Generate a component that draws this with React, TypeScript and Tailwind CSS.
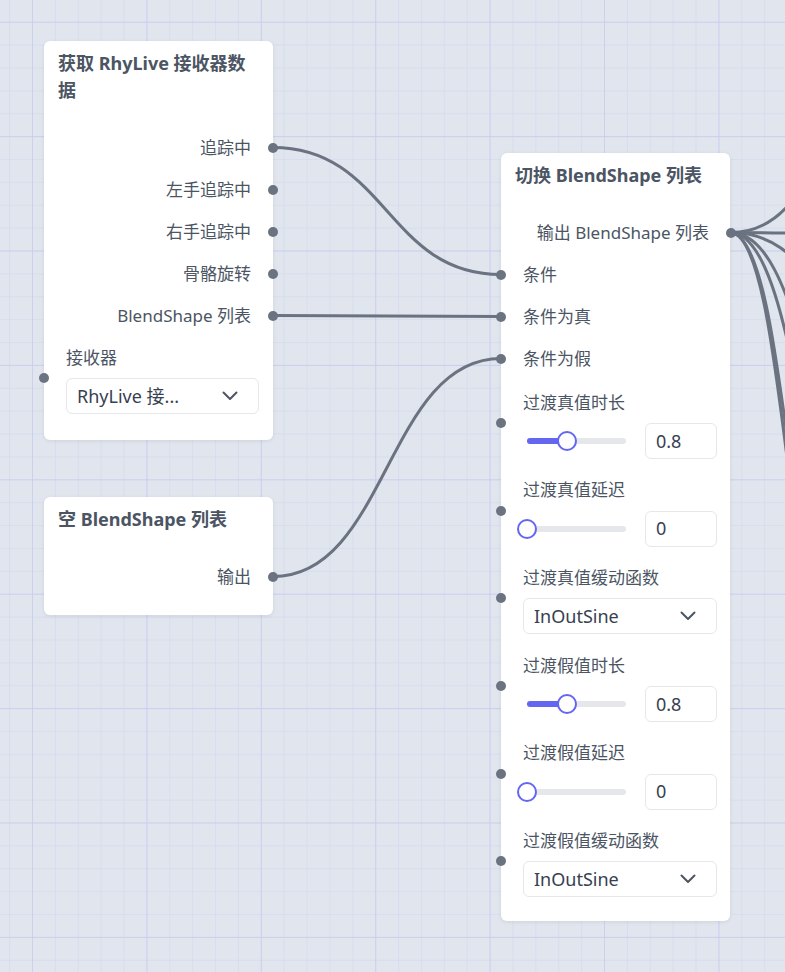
import React from 'react';

const Dot: React.FC<{ side: 'left' | 'right' }> = ({ side }) => (
  <span
    className={
      side === 'left'
        ? 'absolute left-[-27px] top-0 -translate-y-1/2 w-[10px] h-[10px] rounded-full bg-[#6b7280]'
        : 'absolute right-[-19px] top-1/2 -translate-y-1/2 w-[10px] h-[10px] rounded-full bg-[#6b7280]'
    }
  />
);

const Chevron: React.FC = () => (
  <svg width="16" height="10" viewBox="0 0 16 10" fill="none">
    <path d="M1.5 1.5 L8 8 L14.5 1.5" stroke="#4b5563" strokeWidth="2" strokeLinecap="round" strokeLinejoin="round" />
  </svg>
);

const Select: React.FC<{ value: string }> = ({ value }) => (
  <div className="flex h-[36px] items-center justify-between rounded-md border border-[#e5e7eb] bg-white pl-[10px] pr-[20px] text-[18px] text-[#374151]">
    <span>{value}</span>
    <Chevron />
  </div>
);

const OutRow: React.FC<{ label: string }> = ({ label }) => (
  <div className="relative flex h-[42px] items-center justify-end pr-[8px]">
    <span>{label}</span>
    <Dot side="right" />
  </div>
);

const InRow: React.FC<{ label: string }> = ({ label }) => (
  <div className="relative flex h-[42px] items-center">
    <span>{label}</span>
    <span className="absolute left-[-27px] top-1/2 -translate-y-1/2 w-[10px] h-[10px] rounded-full bg-[#6b7280]" />
  </div>
);

const Slider: React.FC<{ value: string; pct: number }> = ({ value, pct }) => (
  <div className="flex items-center">
    <div className="ml-[4px] w-[99px]">
      <div className="relative h-[6px] rounded-full bg-[#e5e7eb]">
        <div className="absolute left-0 top-0 h-full rounded-full bg-[#6366f1]" style={{ width: `${pct}%` }} />
        <div
          className="absolute top-1/2 h-[20px] w-[20px] -translate-x-1/2 -translate-y-1/2 rounded-full border-2 border-[#6366f1] bg-white"
          style={{ left: `${pct}%` }}
        />
      </div>
    </div>
    <div className="ml-auto flex h-[36px] w-[72px] items-center rounded-md border border-[#e5e7eb] bg-white pl-[10px] text-[18px] text-[#374151]">
      {value}
    </div>
  </div>
);

const Field: React.FC<{ label: string; children: React.ReactNode }> = ({ label, children }) => (
  <div>
    <div className="h-[21px] leading-[21px]">{label}</div>
    <div className="relative mt-[10.5px]">
      <Dot side="left" />
      {children}
    </div>
  </div>
);

const Title: React.FC<{ text: string }> = ({ text }) => (
  <div className="px-[14px] pt-[9px] text-[18px] font-bold leading-[27px] text-[#4b5563]">{text}</div>
);

export default function App() {
  const edges = [
    'M273 147.5 C387 147.5 387 274.5 501 274.5',
    'M273 315.5 C387 315.5 387 316.5 501 316.5',
    'M273 576.5 C387 576.5 387 358.5 501 358.5',
    // outgoing from the switch node, targets off screen
    'M730 232.5 C805 232.5 805 140 880 140',
    'M730 232.5 C865 232.5 865 240 1000 240',
    'M730 232.5 C815 232.5 815 330 900 330',
    'M730 232.5 C805 232.5 805 470 880 470',
    'M730 232.5 C805 232.5 805 620 880 620',
    'M730 232.5 C787.5 232.5 787.5 690 845 690',
    'M730 232.5 C791 232.5 791 700 852 700',
  ];

  return (
    <div className="relative h-[972px] w-[785px] overflow-hidden bg-[#e0e5ee] font-['Noto_Sans','Noto_Sans_CJK_SC',sans-serif] text-[17px] text-[#4b5563]">
      <svg className="absolute inset-0" width="785" height="972">
        <defs>
          <pattern id="minor" x="32" y="21.7" width="22.88" height="22.88" patternUnits="userSpaceOnUse">
            <path d="M22.88 0 L0 0 0 22.88" fill="none" stroke="#d2d6ef" strokeWidth="1" />
          </pattern>
          <pattern id="major" x="32" y="21.7" width="114.4" height="114.4" patternUnits="userSpaceOnUse">
            <path d="M114.4 0 L0 0 0 114.4" fill="none" stroke="#c7cbf0" strokeWidth="1.5" />
          </pattern>
        </defs>
        <rect width="785" height="972" fill="url(#minor)" />
        <rect width="785" height="972" fill="url(#major)" />
        {edges.map((d, i) => (
          <path key={i} d={d} fill="none" stroke="#6b7280" strokeWidth="3" />
        ))}
      </svg>

      {/* receiver node */}
      <div className="absolute left-[44px] top-[41px] w-[229px] rounded-md bg-white pb-[25.5px] shadow-[0_1px_4px_rgba(0,0,0,0.08)]">
        <Title text="获取 RhyLive 接收器数据" />
        <div className="pl-[22px] pr-[14px] pt-[22.5px]">
          <OutRow label="追踪中" />
          <OutRow label="左手追踪中" />
          <OutRow label="右手追踪中" />
          <OutRow label="骨骼旋转" />
          <OutRow label="BlendShape 列表" />
          <div className="mt-[10px]">
            <Field label="接收器">
              <Select value="RhyLive 接..." />
            </Field>
          </div>
        </div>
      </div>

      {/* empty list node */}
      <div className="absolute left-[44px] top-[497px] w-[229px] rounded-md bg-white pb-[17px] shadow-[0_1px_4px_rgba(0,0,0,0.08)]">
        <Title text="空 BlendShape 列表" />
        <div className="pl-[22px] pr-[14px] pt-[22.5px]">
          <OutRow label="输出" />
        </div>
      </div>

      {/* switch node */}
      <div className="absolute left-[501px] top-[153px] w-[229px] rounded-md bg-white pb-[24px] shadow-[0_1px_4px_rgba(0,0,0,0.08)]">
        <Title text="切换 BlendShape 列表" />
        <div className="pl-[22px] pr-[13px] pt-[22.5px]">
          <OutRow label="输出 BlendShape 列表" />
          <InRow label="条件" />
          <InRow label="条件为真" />
          <InRow label="条件为假" />
          <div className="mt-[12px] flex flex-col gap-[20.2px]">
            <Field label="过渡真值时长">
              <Slider value="0.8" pct={40} />
            </Field>
            <Field label="过渡真值延迟">
              <Slider value="0" pct={0} />
            </Field>
            <Field label="过渡真值缓动函数">
              <Select value="InOutSine" />
            </Field>
            <Field label="过渡假值时长">
              <Slider value="0.8" pct={40} />
            </Field>
            <Field label="过渡假值延迟">
              <Slider value="0" pct={0} />
            </Field>
            <Field label="过渡假值缓动函数">
              <Select value="InOutSine" />
            </Field>
          </div>
        </div>
      </div>
    </div>
  );
}
